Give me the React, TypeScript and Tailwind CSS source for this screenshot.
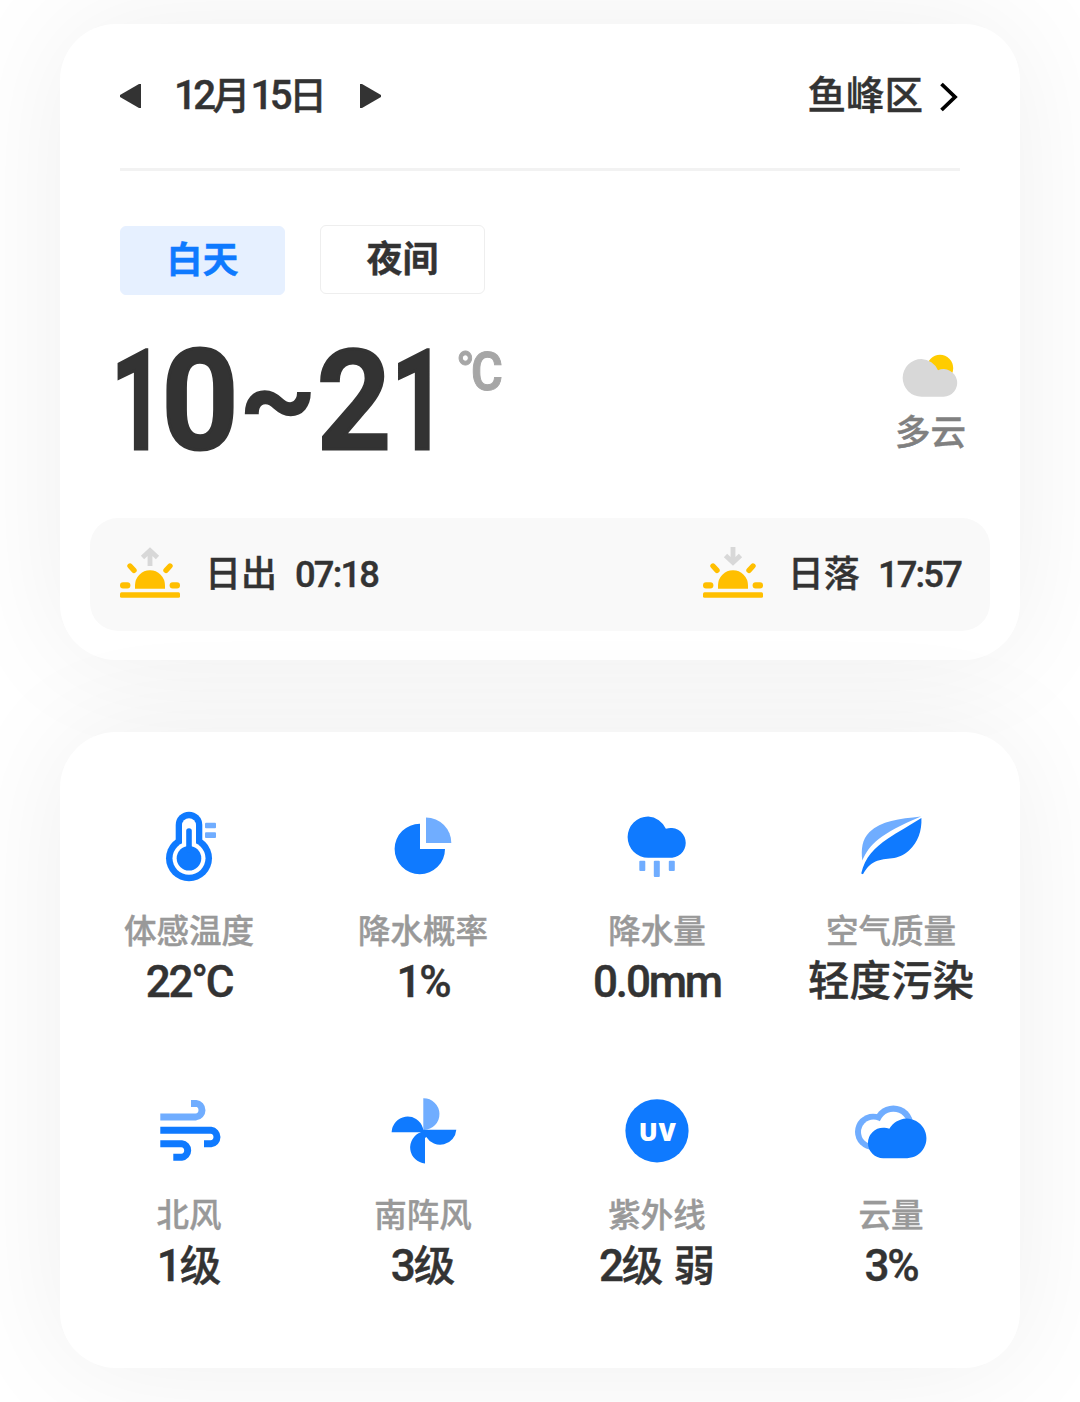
import { useState } from 'react'
import type { ReactNode } from 'react'

const BLUE = '#0f7aff'
const LIGHT_BLUE = '#70adff'

interface Metric {
  label: string
  value: string
  icon: ReactNode
}

const ThermometerIcon = () => (
  <svg width="72" height="72" viewBox="0 0 72 72" fill={BLUE}>
    <circle cx="36" cy="47.3" r="23" />
    <rect x="22.7" y="0.7" width="26.6" height="40" rx="13.3" />
    <circle cx="36" cy="47.3" r="16.5" fill="#fff" />
    <rect x="29" y="7.3" width="14" height="36" rx="7" fill="#fff" />
    <circle cx="36" cy="47.3" r="12.3" />
    <rect x="33.2" y="17.3" width="5.6" height="24" rx="2.8" />
    <rect x="52" y="11.7" width="11" height="5.6" rx="1" fill={LIGHT_BLUE} />
    <rect x="52" y="21.3" width="11" height="5.6" rx="1" fill={LIGHT_BLUE} />
  </svg>
)

const PieIcon = () => (
  <svg width="72" height="72" viewBox="0 0 72 72" fill={BLUE}>
    <path d="M33 12.8V38H58A25.2 25.2 0 1 1 33 12.8Z" />
    <path d="M39 6.5A25.3 25.3 0 0 1 64.3 32H39Z" fill={LIGHT_BLUE} />
  </svg>
)

const RainIcon = () => (
  <svg width="72" height="72" viewBox="0 0 72 72" fill={BLUE}>
    <path d="M27.2 5.5A20.6 20.6 0 0 1 44.9 17.8A14.9 14.9 0 1 1 51.2 46.7H27.2A20.6 20.6 0 0 1 27.2 5.5Z" />
    <g fill={LIGHT_BLUE}>
      <rect x="18.3" y="49.7" width="6" height="10.3" rx="1" />
      <rect x="32.8" y="49.7" width="6" height="16.3" rx="1" />
      <rect x="47.8" y="49.7" width="6" height="10.3" rx="1" />
    </g>
  </svg>
)

const LeafIcon = () => (
  <svg width="72" height="72" viewBox="0 0 72 72" fill={BLUE}>
    <path d="M66 5.6C44 8 26 10 14.5 21C7 28.5 6 38 7.3 49.5C15 33 24 23.5 66 5.6Z" fill={LIGHT_BLUE} />
    <path d="M66.4 7C67 20 63 31 54 39.5C43 50 31 46 20.5 50.5C14 53.5 11 58 8 63.2L6.2 62.5C10 46 19 37 33 27.5C43 20.5 54 15 66.4 7Z" />
  </svg>
)

const WindIcon = () => (
  <svg width="72" height="72" viewBox="0 0 72 72" fill="none" stroke={BLUE} strokeWidth="7">
    <path d="M7.3 21.9H43A6.8 6.8 0 0 0 43 8.4H38" stroke={LIGHT_BLUE} />
    <path d="M7.3 35.3H58A6.8 6.8 0 0 1 58 48.8H51" />
    <path d="M7.3 48.7H28.7A6.8 6.8 0 0 1 28.7 62.2H20.3" />
  </svg>
)

const FanIcon = () => (
  <svg width="72" height="72" viewBox="0 0 72 72" fill={BLUE}>
    <path d="M36.3 3.3A15.8 15.8 0 0 1 37 34.9H36.3Z" fill={LIGHT_BLUE} />
    <path d="M4.6 37.3A16 16.3 0 0 1 35.8 32.8L36.3 34.7H69.3A16.2 16.2 0 0 1 39.3 42L38 43V68.4A16 16 0 0 1 34 37.3Z" />
  </svg>
)

const UvIcon = () => (
  <svg width="72" height="72" viewBox="0 0 72 72">
    <circle cx="36" cy="35.8" r="31.6" fill={BLUE} />
    <text
      x="36.8"
      y="46"
      textAnchor="middle"
      fill="#fff"
      className="font-['Open_Sans',sans-serif] text-[25px] font-extrabold tracking-[1px]"
    >
      UV
    </text>
  </svg>
)

const CloudsIcon = () => (
  <svg width="72" height="72" viewBox="0 0 72 72" fill={BLUE}>
    <g fill={LIGHT_BLUE}>
      <circle cx="18" cy="36.8" r="18" />
      <circle cx="38.4" cy="30.5" r="20" />
    </g>
    <g fill="#fff">
      <circle cx="18.5" cy="37" r="12.5" />
      <circle cx="38.4" cy="31" r="14.3" />
      <rect x="18" y="28" width="12" height="16" />
    </g>
    <path d="M28.2 32.7C30.5 32.7 32.3 33 34.3 33.8A19.8 19.8 0 1 1 52.3 63.2H28.2A15.2 15.2 0 0 1 28.2 32.7Z" />
  </svg>
)

const CloudyIcon = () => (
  <svg width="60" height="48" viewBox="0 0 60 48">
    <circle cx="40" cy="16" r="13.2" fill="#fc0" />
    <path
      d="M21.5 7A18.8 18.8 0 0 1 38 18.2A13.8 13.8 0 1 1 43.6 44.7H21.5A18.8 18.8 0 0 1 21.5 7Z"
      fill="#d8d8d8"
    />
  </svg>
)

function HorizonIcon({ down = false }: { down?: boolean }) {
  return (
    <svg width="60" height="54" viewBox="0 0 60 54" fill="#ffbf00" className="mb-[3px]">
      <path
        d={down ? 'M30 1V16M22.5 9.5L30 16.5L37.5 9.5' : 'M30 20V5M22.5 11.5L30 4.5L37.5 11.5'}
        fill="none"
        stroke="#d8d8d8"
        strokeWidth="4.8"
      />
      <path d="M15 42.7V39.3A15 15 0 0 1 45 39.3V42.7Z" />
      <path d="M10 20L14 24.3M50 20L46 24.3" stroke="#ffbf00" strokeWidth="5.4" strokeLinecap="round" />
      <rect y="36.3" width="10.4" height="6.2" rx="3" />
      <rect x="49.6" y="36.3" width="10.4" height="6.2" rx="3" />
      <rect y="46.3" width="60" height="5.4" rx="1.5" />
    </svg>
  )
}

const METRICS: Metric[] = [
  { label: '体感温度', value: '22°C', icon: <ThermometerIcon /> },
  { label: '降水概率', value: '1%', icon: <PieIcon /> },
  { label: '降水量', value: '0.0mm', icon: <RainIcon /> },
  { label: '空气质量', value: '轻度污染', icon: <LeafIcon /> },
  { label: '北风', value: '1级', icon: <WindIcon /> },
  { label: '南阵风', value: '3级', icon: <FanIcon /> },
  { label: '紫外线', value: '2级 弱', icon: <UvIcon /> },
  { label: '云量', value: '3%', icon: <CloudsIcon /> },
]

// Latin runs are set a little larger and tighter than the Chinese around them
function Mixed({ text, tight = false }: { text: string; tight?: boolean }) {
  return (
    <>
      {text.split(/([0-9.:%°a-zA-Z]+)/).map((part, i) =>
        i % 2 ? (
          <span key={i} className={tight ? 'text-[1.06em] tracking-[-0.09em]' : 'text-[1.06em] tracking-[-0.05em]'}>
            {part}
          </span>
        ) : (
          part
        ),
      )}
    </>
  )
}

export default function App() {
  const [period, setPeriod] = useState<'day' | 'night'>('day')

  return (
    <div className="h-[1402px] w-[1080px] overflow-hidden bg-white px-[60px] pt-6 font-[Roboto,'Noto_Sans_CJK_SC',sans-serif] font-medium text-[#333] [-webkit-text-stroke:0.4px]">
      <section className="h-[636px] rounded-[56px] bg-white px-[30px] pt-[42px] shadow-[0_0_120px_rgba(0,0,0,0.065)]">
        <header className="mx-[30px] flex h-[105px] items-start justify-between border-b-3 border-[#f2f2f2]">
          <div className="flex h-[60px] items-center">
            <button>
              <svg width="21" height="24" viewBox="0 0 21 24" className="block" fill="#333">
                <path d="M21 0V24H19L0 13V11L19 0Z" />
              </svg>
            </button>
            <span className="w-[219px] text-center text-[38px] leading-[60px] whitespace-nowrap">
              <Mixed text="12月15日" tight />
            </span>
            <button>
              <svg width="21" height="24" viewBox="0 0 21 24" className="block" fill="#333">
                <path d="M0 0V24H2L21 13V11L2 0Z" />
              </svg>
            </button>
          </div>
          <button className="flex h-[60px] items-center gap-[17px] text-[38.5px] leading-[60px]">
            鱼峰区
            <svg width="20" height="30" viewBox="0 0 20 30" fill="none" stroke="#000" strokeWidth="3.8" className="mt-px">
              <path d="M1.5 2L15 15L1.5 28" />
            </svg>
          </button>
        </header>

        <div className="mx-[30px] mt-[54px] flex gap-[35px] text-[36px] leading-[66px] font-bold">
          <button
            onClick={() => setPeriod('day')}
            className={`mt-px h-[69px] w-[165px] rounded-md border ${
              period === 'day' ? 'border-[#e6f0ff] bg-[#e6f0ff] text-[#0f7aff]' : 'border-[#eee] bg-white'
            }`}
          >
            白天
          </button>
          <button
            onClick={() => setPeriod('night')}
            className={`h-[69px] w-[165px] rounded-md border ${
              period === 'night' ? 'border-[#e6f0ff] bg-[#e6f0ff] text-[#0f7aff]' : 'border-[#eee] bg-white'
            }`}
          >
            夜间
          </button>
        </div>

        <div className="mx-[30px] mt-[30px] flex h-[180px] justify-between">
          <div className="flex">
            <div className="-ml-[5px] flex text-[140px] leading-[152px] font-semibold [-webkit-text-stroke:3px]">
              <span className="flex w-[41px] justify-center"><span className="translate-x-0.5 scale-x-[0.68]">1</span></span>
              <span className="flex w-[88px] justify-center"><span className="scale-x-[0.97]">0</span></span>
              <span className="flex w-[67px] justify-center"><span className="-translate-y-1.5 scale-x-[0.83] scale-y-[0.8]">~</span></span>
              <span className="flex w-[86px] justify-center"><span className="scale-x-[0.93]">2</span></span>
              <span className="flex w-[33px] justify-center"><span className="translate-x-[5px] scale-x-[0.7]">1</span></span>
            </div>
            <span className="mt-[15px] ml-[26px] origin-left scale-x-[0.9] text-[54px] leading-[64px] font-semibold tracking-[-0.08em] text-[#a6a6a6] [-webkit-text-stroke:1px]">
              °C
            </span>
          </div>
          <div className="-mr-1.5 flex flex-col items-center pt-[27px] text-[35.5px] leading-[66px] text-[#808080]">
            <CloudyIcon />
            <span>多云</span>
          </div>
        </div>

        <div className="mt-[13px] flex h-[113px] items-center justify-between rounded-[28px] bg-[#f9f9f9] px-[30px] text-[36px] leading-[60px]">
          <div className="flex items-center">
            <HorizonIcon />
            <span className="ml-[25px]">日出</span>
            <span className="ml-[18px] text-[34.3px]"><Mixed text="07:18" /></span>
          </div>
          <div className="-mr-px flex items-center">
            <HorizonIcon down />
            <span className="ml-[25px]">日落</span>
            <span className="ml-[18px] text-[34.3px]"><Mixed text="17:57" /></span>
          </div>
        </div>
      </section>

      <section className="mt-[72px] grid h-[636px] auto-rows-[284px] grid-cols-4 rounded-[56px] bg-white px-3 pt-[79px] shadow-[0_0_120px_rgba(0,0,0,0.065)]">
        {METRICS.map((m) => (
          <div key={m.label} className="flex flex-col items-center whitespace-nowrap">
            {m.icon}
            <div className="mt-[25px] h-[47px] text-[32.5px] leading-[48px] text-[#999]">{m.label}</div>
            <div className="h-[54px] text-[41.5px] leading-[54px]">
              <Mixed text={m.value} />
            </div>
          </div>
        ))}
      </section>
    </div>
  )
}
